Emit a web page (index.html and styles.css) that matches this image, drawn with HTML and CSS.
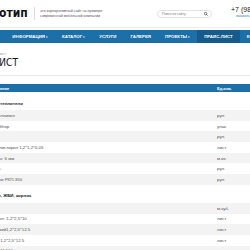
FILE: index.html
```html
<!DOCTYPE html>
<html lang="ru">
<head>
<meta charset="utf-8">
<link rel="stylesheet" href="styles.css">
</head>
<body>
<div class="page">
  <header class="top">
    <div class="logo">Логотип</div>
    <div class="slogan">это корпоративный сайт на примере<br>современной мебельной компании</div>
    <div class="search"><span>Поиск по сайту</span>
      <svg class="loupe" viewBox="0 0 10 10" width="4" height="4"><circle cx="4" cy="4" r="3" fill="none" stroke="#333" stroke-width="1.6"/><path d="M6.2 6.2 9 9" stroke="#333" stroke-width="1.8"/></svg>
    </div>
    <div class="phone">
      <div class="num">+7 (987) 654-32-10</div>
      <a class="call">заказать звонок</a>
    </div>
  </header>
  <nav class="menu">
    <a class="item">Главная</a>
    <a class="item">Информация <span class="caret">▾</span></a>
    <a class="item">Каталог <span class="caret">▾</span></a>
    <a class="item">Услуги</a>
    <a class="item">Галерея</a>
    <a class="item">Проекты <span class="caret">▾</span></a>
    <a class="item active">Прайс-лист</a>
    <a class="item">Контакты</a>
  </nav>
  <div class="crumbs">Главная / Прайс-лист</div>
  <h1 class="title">Прайс-лист</h1>
  <table class="price">
    <thead>
      <tr><th class="name">Наименование</th><th class="unit">Ед.изм.</th></tr>
    </thead>
    <tbody>
      <tr class="group"><td class="name">Материалы, утеплители</td><td class="unit"></td></tr>
      <tr><td class="name">Рулонный стеклоизол</td><td class="unit">рул.</td></tr>
      <tr><td class="name">Изоляция StarShop</td><td class="unit">упак.</td></tr>
      <tr><td class="name">Рубероид</td><td class="unit">рул.</td></tr>
      <tr><td class="name">Плиты пенополистирол 1,2*1,2*0,05</td><td class="unit">лист</td></tr>
      <tr><td class="name">Пенофол фольг. 6 мм</td><td class="unit">м.кв.</td></tr>
      <tr><td class="name">Пергамин кров.</td><td class="unit">рул.</td></tr>
      <tr><td class="name">Рубероид марки РКП-350</td><td class="unit">рул.</td></tr>
      <tr class="group"><td class="name">Цемент, бетон, ЖБИ, кирпич</td><td class="unit"></td></tr>
      <tr><td class="name">Бетон М200</td><td class="unit">м.куб.</td></tr>
      <tr><td class="name">Гипсокартон рол. 1,2*2,5*10</td><td class="unit">лист</td></tr>
      <tr><td class="name">ГКЛ влагостойкий1,2*2,5*12.5</td><td class="unit">лист</td></tr>
      <tr><td class="name">ГКЛ огнестойк 1,2*2,5*12.5</td><td class="unit">лист</td></tr>
      <tr><td class="name">Кирпич лицев. М-100</td><td class="unit">шт.</td></tr>
    </tbody>
  </table>
</div>
</body>
</html>
```
FILE: styles.css
```css
html, body { margin: 0; padding: 0; background: #fff; }
body { overflow: hidden; width: 250px; height: 250px; font-family: "Liberation Sans", Arial, sans-serif; color: #333; }
.page { width: 250px; }

.top { height: 27px; border-bottom: 1px solid #ececec; display: flex; align-items: center; margin-bottom: 2px; }
.top > * { flex-shrink: 0; }
.logo { margin-left: -23px; width: 52px; padding-right: 5px; border-right: 1px solid #ddd; font-family: "Liberation Sans Narrow", "DejaVu Sans Condensed", "Liberation Sans", sans-serif; font-stretch: condensed; font-size: 12px; font-weight: bold; color: #111; line-height: 13px; white-space: nowrap; overflow: hidden; }
.slogan { margin-left: 5px; width: 100px; font-size: 3.7px; line-height: 5px; color: #555; white-space: nowrap; }
.search { margin-left: 17px; width: 55px; height: 8px; box-sizing: border-box; border: 1px solid #e2e2e2; border-radius: 4px; display: flex; align-items: center; justify-content: space-between; padding: 0 3px 0 4px; font-size: 3.4px; color: #777; }
.loupe { display: block; }
.phone { margin-left: 19px; margin-top: -3px; white-space: nowrap; }
.num { font-size: 7px; color: #222; line-height: 8px; }
.call { display: block; margin-left: 5px; font-size: 3.4px; color: #2a77b4; line-height: 5px; }

.menu { height: 13px; background: #1d6fa8; display: flex; margin-left: -30px; width: 320px; }
.item { display: flex; align-items: center; padding: 0 7px; font-size: 4.4px; font-weight: bold; color: #fff; text-transform: uppercase; white-space: nowrap; }
.caret { margin-left: 1px; font-size: 3px; }
.active { background: #175b8c; }

.crumbs { margin: 9px 0 0 -30px; font-size: 3.6px; color: #999; line-height: 5px; }
.title { margin: 0 0 0 -42px; width: 292px; padding: 0 0 6px; border-bottom: 1px solid #e8e8e8; font-family: "Liberation Sans Narrow", "DejaVu Sans Condensed", "Liberation Sans", sans-serif; font-stretch: condensed; font-size: 10px; font-weight: normal; color: #111; line-height: 12px; text-transform: uppercase; }

.price { margin: 8px 0 0 -34px; width: 286px; border-collapse: collapse; font-size: 4.4px; color: #555; }
.price th { height: 8px; padding: 0; background: #1d6fa8; color: #fff; font-weight: bold; font-size: 4px; text-align: left; }
.price th.name { padding-left: 14px; }
.price td { height: 10.7px; padding: 0; }
.price td.name { padding-left: 4px; white-space: nowrap; }
.price .unit { width: 35px; }
.price tbody tr:nth-child(even) td { background: #f3f3f3; }
.price tr.group td { height: 18px; padding-top: 4px; box-sizing: border-box; background: #fff; font-weight: bold; color: #222; }
```
